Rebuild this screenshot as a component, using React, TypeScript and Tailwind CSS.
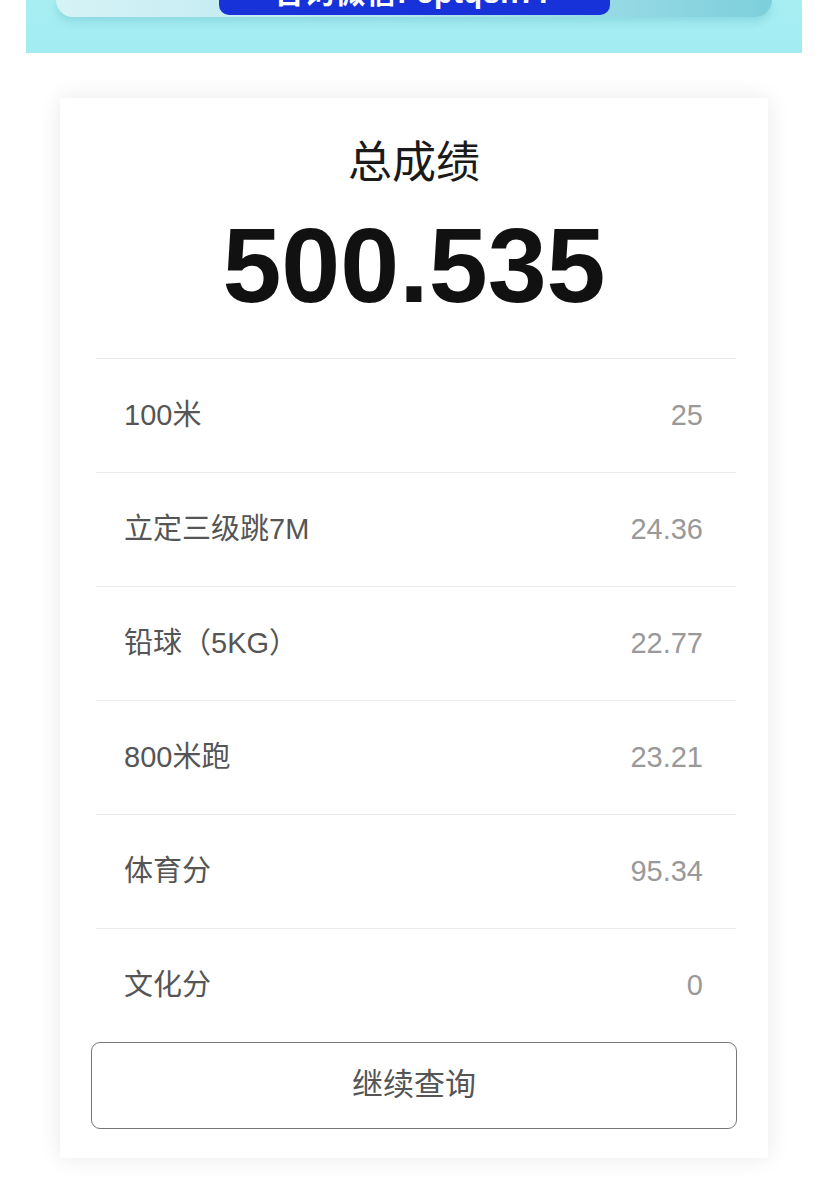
import React from 'react'

const rows = [
  { label: '100米', value: '25' },
  { label: '立定三级跳7M', value: '24.36' },
  { label: '铅球（5KG）', value: '22.77' },
  { label: '800米跑', value: '23.21' },
  { label: '体育分', value: '95.34' },
  { label: '文化分', value: '0' },
]

const font = { fontFamily: '"Liberation Sans", "Noto Sans CJK SC", sans-serif' }

export default function App() {
  return (
    <div className="w-[828px] min-h-[1190px] bg-white" style={font}>
      {/* banner, cut at the top */}
      <div className="mx-auto w-[776px] h-[53px] bg-gradient-to-b from-[#a7eef2] to-[#a2ecf1] px-[30px]">
        <div className="h-[17px] rounded-b-[24px] bg-gradient-to-r from-[#d6f3f6] via-[#b3e6ee] to-[#7dcfdc] shadow-[0_4px_8px_rgba(60,150,170,0.25)] flex justify-center">
          <div className="w-[391px] h-[15px] rounded-b-[10px] bg-[#1732d9] overflow-hidden flex flex-col justify-end items-center">
            <div className="text-white font-bold text-[30px] leading-[30px] mb-[7px] tracking-wide">
              咨询微信: eptqsh77
            </div>
          </div>
        </div>
      </div>

      {/* result card */}
      <div className="mx-auto mt-[45px] w-[708px] bg-white shadow-[0_0_22px_rgba(0,0,0,0.09)] pt-[35px] pb-[29px]">
        <div className="h-[60px] leading-[60px] text-center text-[44px] text-[#1a1a1a]">总成绩</div>
        <div className="mt-[12px] h-[120px] leading-[120px] text-center text-[106px] font-bold text-[#111]">
          500.535
        </div>

        <div className="mt-[33px] ml-[36px] mr-[32px]">
          {rows.map((r) => (
            <div
              key={r.label}
              className="h-[114px] border-t border-[#ebebeb] flex items-center justify-between pl-[28px] pr-[33px] text-[29px]"
            >
              <span className="text-[#555]">{r.label}</span>
              <span className="text-[#999]">{r.value}</span>
            </div>
          ))}
        </div>

        <div className="mx-[31px]">
          <button className="w-full h-[87px] rounded-[9px] border border-[#777] bg-white text-[31px] text-[#555]">
            继续查询
          </button>
        </div>
      </div>
    </div>
  )
}
